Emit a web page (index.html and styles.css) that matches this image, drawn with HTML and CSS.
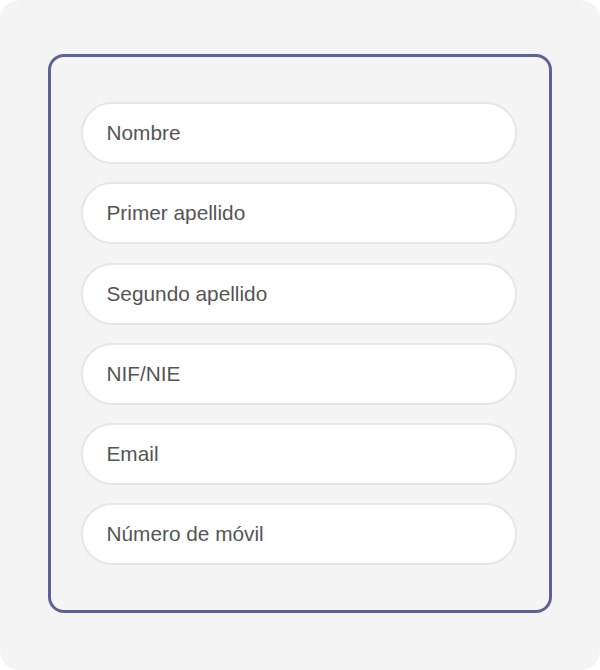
FILE: index.html
```html
<!DOCTYPE html>
<html lang="es">
<head>
<meta charset="utf-8">
<title>Formulario</title>
<link rel="stylesheet" href="styles.css">
</head>
<body>
<div class="page">
  <form class="card">
    <input class="field" type="text" placeholder="Nombre">
    <input class="field" type="text" placeholder="Primer apellido">
    <input class="field" type="text" placeholder="Segundo apellido">
    <input class="field" type="text" placeholder="NIF/NIE">
    <input class="field" type="email" placeholder="Email">
    <input class="field" type="tel" placeholder="Número de móvil">
  </form>
</div>
</body>
</html>
```
FILE: styles.css
```css
html, body {
  margin: 0;
  padding: 0;
  background: #ffffff;
}
.page {
  width: 600px;
  height: 670px;
  box-sizing: border-box;
  background: #f4f4f4;
  border-radius: 20px;
  padding: 54px 48px 0 48px;
  font-family: "Liberation Sans", Arial, sans-serif;
}
.card {
  box-sizing: border-box;
  width: 504px;
  height: 559px;
  border: 3px solid #5d6196;
  border-radius: 16px;
  padding: 45px 32px 0 30px;
  display: flex;
  flex-direction: column;
  gap: 18.3px;
  margin: 0;
}
.field {
  box-sizing: border-box;
  width: 436px;
  height: 62px;
  border: 2px solid #e6e6e6;
  border-radius: 31px;
  background: #ffffff;
  padding: 0 0 0 23.5px;
  font-family: "Liberation Sans", Arial, sans-serif;
  font-size: 20.8px;
  color: #555555;
  outline: none;
  margin: 0;
}
.field::placeholder {
  color: #555555;
  opacity: 1;
}
```
